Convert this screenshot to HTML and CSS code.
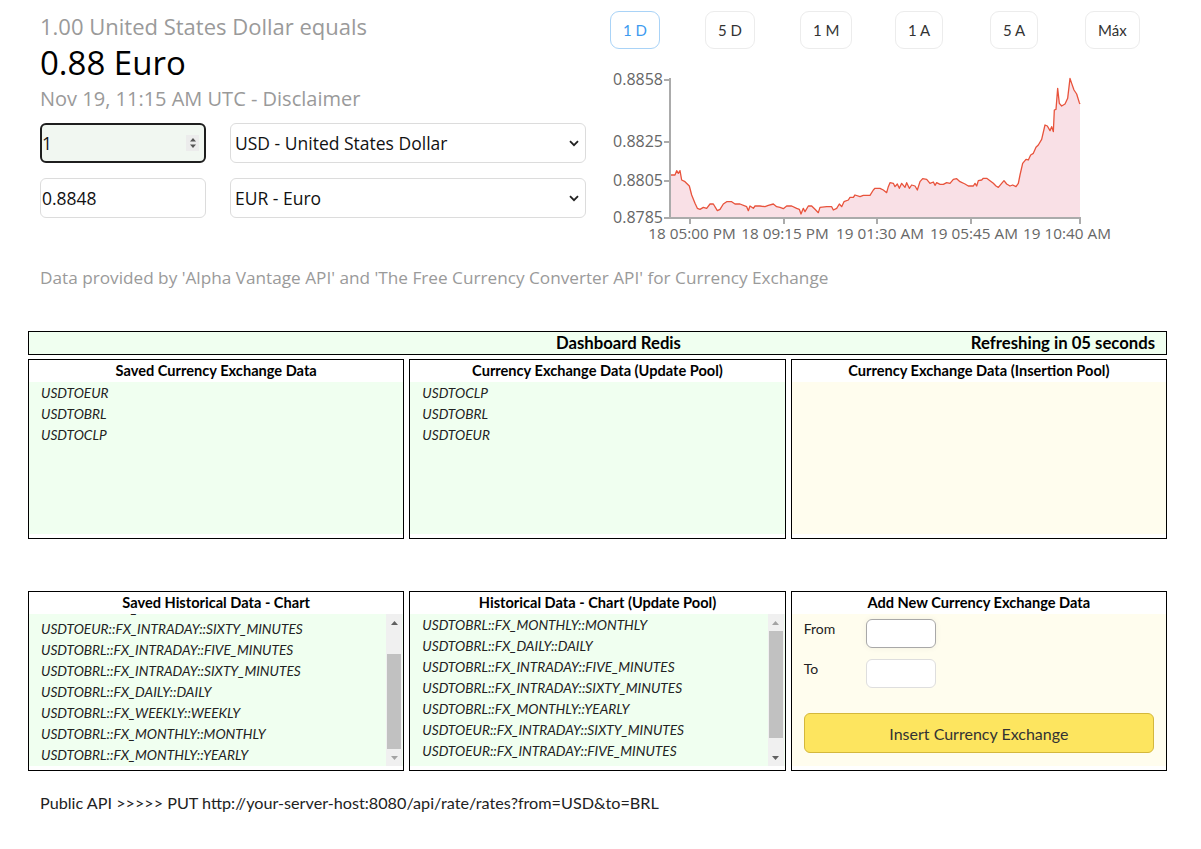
FILE: index.html
```html
<!DOCTYPE html>
<html lang="en">
<head>
<meta charset="utf-8">
<title>Currency Exchange - Dashboard Redis</title>
<link rel="stylesheet" href="styles.css">
</head>
<body>
<div class="page">
  <section class="top">
    <div class="converter">
      <div class="equals">1.00 United States Dollar equals</div>
      <div class="result">0.88 Euro</div>
      <div class="stamp">Nov 19, 11:15 AM UTC - Disclaimer</div>
      <div class="conv-row">
        <div class="num-box focused">
          <input class="num" type="text" value="1">
          <span class="spin"><svg width="8" height="14" viewBox="0 0 8 14"><path d="M1 5.5 L4 2 L7 5.5 Z M1 8.5 L4 12 L7 8.5 Z" fill="#555"/></svg></span>
        </div>
        <div class="sel-box">
          <select class="sel"><option>USD - United States Dollar</option></select>
          <svg class="chev" width="10" height="7" viewBox="0 0 10 7"><path d="M1 1.2 L5 5.2 L9 1.2" fill="none" stroke="#222" stroke-width="1.8"/></svg>
        </div>
      </div>
      <div class="conv-row">
        <div class="num-box">
          <input class="num" type="text" value="0.8848">
        </div>
        <div class="sel-box">
          <select class="sel"><option>EUR - Euro</option></select>
          <svg class="chev" width="10" height="7" viewBox="0 0 10 7"><path d="M1 1.2 L5 5.2 L9 1.2" fill="none" stroke="#222" stroke-width="1.8"/></svg>
        </div>
      </div>
    </div>
    <div class="chart-col">
      <div class="ranges">
        <button class="range active">1 D</button>
        <button class="range">5 D</button>
        <button class="range">1 M</button>
        <button class="range">1 A</button>
        <button class="range">5 A</button>
        <button class="range">Máx</button>
      </div>
      <svg class="chart" width="530" height="185" viewBox="0 0 530 185">
        <g transform="translate(30,0) scale(0.333333)">
          <path class="area" d="M90,475 L90,345 105,345 110,332 115,340 120,332 125,360 135,365 148,378 155,405 165,430 172,445 180,448 190,442 200,445 210,432 220,432 232,452 240,448 250,432 260,425 275,425 285,432 300,432 320,440 325,452 330,438 340,445 345,438 360,438 375,440 385,436 400,432 410,440 420,442 430,446 440,438 455,438 470,445 478,448 483,462 490,445 495,455 505,438 515,438 525,448 535,458 540,442 560,440 575,440 580,450 590,445 598,432 605,440 612,425 625,420 630,412 640,412 645,405 660,410 670,406 690,406 700,390 705,385 720,385 730,390 740,398 745,380 750,368 760,370 765,380 772,372 778,385 785,370 795,382 800,368 808,385 815,375 825,378 832,390 840,365 848,356 860,358 870,370 880,366 885,376 890,368 900,373 910,373 920,368 930,370 940,358 950,356 960,365 975,372 985,378 1000,378 1005,370 1010,378 1015,362 1025,360 1030,355 1040,355 1050,362 1060,370 1068,378 1075,382 1085,370 1092,362 1100,372 1110,378 1118,375 1128,380 1135,370 1140,345 1148,310 1158,298 1165,300 1172,285 1180,280 1188,262 1195,255 1205,238 1215,195 1222,198 1230,212 1235,200 1240,215 1243,150 1248,148 1253,85 1258,130 1265,138 1275,132 1283,115 1290,55 1295,70 1302,90 1310,102 1318,128 1320,132 L1320,475 Z"/>
          <polyline class="line" vector-effect="non-scaling-stroke" points="90,345 105,345 110,332 115,340 120,332 125,360 135,365 148,378 155,405 165,430 172,445 180,448 190,442 200,445 210,432 220,432 232,452 240,448 250,432 260,425 275,425 285,432 300,432 320,440 325,452 330,438 340,445 345,438 360,438 375,440 385,436 400,432 410,440 420,442 430,446 440,438 455,438 470,445 478,448 483,462 490,445 495,455 505,438 515,438 525,448 535,458 540,442 560,440 575,440 580,450 590,445 598,432 605,440 612,425 625,420 630,412 640,412 645,405 660,410 670,406 690,406 700,390 705,385 720,385 730,390 740,398 745,380 750,368 760,370 765,380 772,372 778,385 785,370 795,382 800,368 808,385 815,375 825,378 832,390 840,365 848,356 860,358 870,370 880,366 885,376 890,368 900,373 910,373 920,368 930,370 940,358 950,356 960,365 975,372 985,378 1000,378 1005,370 1010,378 1015,362 1025,360 1030,355 1040,355 1050,362 1060,370 1068,378 1075,382 1085,370 1092,362 1100,372 1110,378 1118,375 1128,380 1135,370 1140,345 1148,310 1158,298 1165,300 1172,285 1180,280 1188,262 1195,255 1205,238 1215,195 1222,198 1230,212 1235,200 1240,215 1243,150 1248,148 1253,85 1258,130 1265,138 1275,132 1283,115 1290,55 1295,70 1302,90 1310,102 1318,128 1320,132"/>
        </g>
        <g class="axis">
          <line x1="60" y1="18" x2="60" y2="159"/>
          <line x1="59" y1="158" x2="471" y2="158"/>
          <line x1="54" y1="20" x2="60" y2="20"/>
          <line x1="54" y1="82" x2="60" y2="82"/>
          <line x1="54" y1="121" x2="60" y2="121"/>
          <line x1="54" y1="158" x2="60" y2="158"/>
          <line x1="80" y1="158" x2="80" y2="164"/>
          <line x1="174" y1="158" x2="174" y2="164"/>
          <line x1="267" y1="158" x2="267" y2="164"/>
          <line x1="361" y1="158" x2="361" y2="164"/>
          <line x1="470" y1="158" x2="470" y2="164"/>
        </g>
        <g class="ylabels">
          <text x="53" y="25">0.8858</text>
          <text x="53" y="87">0.8825</text>
          <text x="53" y="126">0.8805</text>
          <text x="53" y="163">0.8785</text>
        </g>
        <g class="xlabels">
          <text x="82" y="179">18 05:00 PM</text>
          <text x="175" y="179">18 09:15 PM</text>
          <text x="270" y="179">19 01:30 AM</text>
          <text x="364" y="179">19 05:45 AM</text>
          <text x="457" y="179">19 10:40 AM</text>
        </g>
      </svg>
    </div>
  </section>

  <p class="credits">Data provided by 'Alpha Vantage API' and 'The Free Currency Converter API' for Currency Exchange</p>

  <section class="dashboard">
    <div class="dash-head">
      <span></span>
      <span class="dash-title">Dashboard Redis</span>
      <span class="dash-refresh">Refreshing in 05 seconds</span>
    </div>

    <div class="panels">
      <div class="panel">
        <div class="panel-title">Saved Currency Exchange Data</div>
        <div class="panel-body green">
          <ul class="items">
            <li>USDTOEUR</li>
            <li>USDTOBRL</li>
            <li>USDTOCLP</li>
          </ul>
        </div>
      </div>
      <div class="panel">
        <div class="panel-title">Currency Exchange Data (Update Pool)</div>
        <div class="panel-body green">
          <ul class="items">
            <li>USDTOCLP</li>
            <li>USDTOBRL</li>
            <li>USDTOEUR</li>
          </ul>
        </div>
      </div>
      <div class="panel">
        <div class="panel-title">Currency Exchange Data (Insertion Pool)</div>
        <div class="panel-body ivory"></div>
      </div>
    </div>

    <div class="panels second">
      <div class="panel">
        <div class="panel-title">Saved Historical Data - Chart</div>
        <div class="panel-body green scroller">
          <div class="viewport">
            <ul class="items scrolled">
              <li>USDTOEUR::FX_DAILY::DAILY</li>
              <li>USDTOEUR::FX_INTRADAY::SIXTY_MINUTES</li>
              <li>USDTOBRL::FX_INTRADAY::FIVE_MINUTES</li>
              <li>USDTOBRL::FX_INTRADAY::SIXTY_MINUTES</li>
              <li>USDTOBRL::FX_DAILY::DAILY</li>
              <li>USDTOBRL::FX_WEEKLY::WEEKLY</li>
              <li>USDTOBRL::FX_MONTHLY::MONTHLY</li>
              <li>USDTOBRL::FX_MONTHLY::YEARLY</li>
            </ul>
          </div>
          <div class="sbar">
            <span class="sbtn"><svg width="7" height="4" viewBox="0 0 7 4"><path d="M0 4 L3.5 0 L7 4 Z" fill="#606060"/></svg></span>
            <span class="strack"><span class="sthumb thumb-end"></span></span>
            <span class="sbtn"><svg width="7" height="4" viewBox="0 0 7 4"><path d="M0 0 L3.5 4 L7 0 Z" fill="#a3a3a3"/></svg></span>
          </div>
        </div>
      </div>
      <div class="panel">
        <div class="panel-title">Historical Data - Chart (Update Pool)</div>
        <div class="panel-body green scroller">
          <div class="viewport">
            <ul class="items">
              <li>USDTOBRL::FX_MONTHLY::MONTHLY</li>
              <li>USDTOBRL::FX_DAILY::DAILY</li>
              <li>USDTOBRL::FX_INTRADAY::FIVE_MINUTES</li>
              <li>USDTOBRL::FX_INTRADAY::SIXTY_MINUTES</li>
              <li>USDTOBRL::FX_MONTHLY::YEARLY</li>
              <li>USDTOEUR::FX_INTRADAY::SIXTY_MINUTES</li>
              <li>USDTOEUR::FX_INTRADAY::FIVE_MINUTES</li>
              <li>USDTOEUR::FX_DAILY::DAILY</li>
            </ul>
          </div>
          <div class="sbar">
            <span class="sbtn"><svg width="7" height="4" viewBox="0 0 7 4"><path d="M0 4 L3.5 0 L7 4 Z" fill="#a3a3a3"/></svg></span>
            <span class="strack"><span class="sthumb thumb-start"></span></span>
            <span class="sbtn"><svg width="7" height="4" viewBox="0 0 7 4"><path d="M0 0 L3.5 4 L7 0 Z" fill="#606060"/></svg></span>
          </div>
        </div>
      </div>
      <div class="panel">
        <div class="panel-title">Add New Currency Exchange Data</div>
        <div class="panel-body ivory form">
          <div class="form-grid">
            <label class="flabel" for="from">From</label>
            <input id="from" class="finput active-input" type="text">
            <label class="flabel" for="to">To</label>
            <input id="to" class="finput" type="text">
          </div>
          <button class="insert">Insert Currency Exchange</button>
        </div>
      </div>
    </div>
  </section>

  <p class="api">Public API &gt;&gt;&gt;&gt;&gt; PUT http://your-server-host:8080/api/rate/rates?from=USD&amp;to=BRL</p>
</div>
</body>
</html>
```

FILE: styles.css
```css
* { box-sizing: border-box; }

html, body {
  margin: 0;
  padding: 0;
  background: #fff;
}

body {
  font-family: Lato, "Noto Sans", sans-serif;
  color: #111;
}

.page {
  width: 1201px;
}

/* ---------- top section ---------- */
.top {
  display: flex;
  align-items: flex-start;
  gap: 24px;
  padding-left: 40px;
  font-family: "Open Sans", "Noto Sans", sans-serif;
}

.converter {
  width: 546px;
  padding-top: 13px;
}

.equals {
  font-size: 22px;
  line-height: 26px;
  color: #9a9a9a;
}

.result {
  margin-top: 4px;
  font-size: 33px;
  line-height: 40px;
  color: #000;
}

.stamp {
  margin-top: 4px;
  font-size: 20px;
  line-height: 24px;
  color: #9a9a9a;
}

.conv-row {
  display: flex;
  gap: 24px;
  margin-top: 12px;
}

.conv-row + .conv-row {
  margin-top: 15px;
}

.num-box {
  width: 166px;
  height: 40px;
  border: 1px solid #dcdcdc;
  border-radius: 6px;
  background: #fff;
  display: flex;
  align-items: center;
  padding: 0 5px 0 1px;
}

.num-box.focused {
  border: 2px solid #1e1e1e;
  background: #f1f7f1;
  padding-left: 0;
}

.num {
  flex: 1;
  min-width: 0;
  border: 0;
  outline: 0;
  background: transparent;
  font-family: inherit;
  font-size: 17.5px;
  color: #111;
  padding: 0;
}

.spin {
  width: 13px;
  height: 16px;
  background: #ececec;
  display: flex;
  align-items: center;
  justify-content: center;
}

.sel-box {
  position: relative;
  width: 356px;
  height: 40px;
}

.sel {
  appearance: none;
  -webkit-appearance: none;
  width: 100%;
  height: 100%;
  border: 1px solid #dcdcdc;
  border-radius: 6px;
  background: #fff;
  font-family: inherit;
  font-size: 17.5px;
  color: #111;
  padding: 0 28px 0 4px;
}

.chev {
  position: absolute;
  right: 7px;
  top: 17px;
  pointer-events: none;
}

.chart-col {
  width: 540px;
  padding-top: 11px;
}

.ranges {
  display: grid;
  grid-template-columns: repeat(6, 95px);
  justify-items: start;
}

.range {
  height: 38px;
  padding: 0 12px;
  border: 1px solid #ececec;
  border-radius: 9px;
  background: #fff;
  font-family: Lato, "Noto Sans", sans-serif;
  font-size: 15px;
  color: #333;
}

.range.active {
  border-color: #a9d3f7;
  color: #3d9bef;
}

.chart {
  display: block;
  margin-top: 11px;
}

.chart .area {
  fill: #f9e0e6;
}

.chart .line {
  fill: none;
  stroke: #e8533c;
  stroke-width: 1.3;
  stroke-linejoin: round;
}

.chart .axis line {
  stroke: #ababab;
  stroke-width: 2;
}

.chart text {
  font-family: "Open Sans", "Noto Sans", sans-serif;
  font-size: 16px;
  fill: #666;
}

.chart .xlabels text {
  text-anchor: middle;
  font-size: 15.3px;
}

.chart .ylabels text {
  text-anchor: end;
}

/* ---------- credits ---------- */
.credits {
  margin: 22px 0 0 40px;
  font-family: "Open Sans", "Noto Sans", sans-serif;
  font-size: 17.2px;
  line-height: 22px;
  color: #9a9a9a;
}

/* ---------- dashboard ---------- */
.dashboard {
  margin: 42px 0 0 28px;
  width: 1139px;
}

.dash-head {
  display: grid;
  grid-template-columns: 1fr auto 1fr;
  height: 24px;
  border: 1px solid #000;
  background: #f0fff0;
  padding: 0 11px 0 53px;
  font-weight: 700;
  font-size: 16.7px;
  line-height: 22px;
  color: #000;
}

.dash-refresh {
  justify-self: end;
}

.panels {
  display: grid;
  grid-template-columns: repeat(3, 1fr);
  gap: 5px;
  margin-top: 4px;
}

.panels.second {
  margin-top: 52px;
}

.panel {
  height: 180px;
  border: 1px solid #000;
  display: flex;
  flex-direction: column;
  padding-bottom: 4px;
}

.panel-title {
  height: 22px;
  line-height: 22px;
  text-align: center;
  font-weight: 700;
  font-size: 14.6px;
  color: #000;
}

.panel-body {
  flex: 1;
  min-height: 0;
}

.green { background: #f0fff0; }
.ivory { background: #fffdee; }

.items {
  list-style: none;
  margin: 0;
  padding: 0 0 0 12px;
}

.items li {
  font-style: italic;
  font-size: 13.7px;
  line-height: 21px;
  color: #222;
  white-space: nowrap;
}

.scroller {
  display: flex;
}

.viewport {
  flex: 1;
  overflow: hidden;
}

.items.scrolled {
  margin-top: -17px;
}

.sbar {
  width: 16px;
  margin-right: 1px;
  display: flex;
  flex-direction: column;
  background: #f0f0f0;
}

.sbtn {
  height: 17px;
  display: flex;
  align-items: center;
  justify-content: center;
}

.strack {
  flex: 1;
  display: flex;
  flex-direction: column;
  padding: 0 1px;
}

.sthumb {
  height: 95px;
  background: #c1c1c1;
}

.thumb-end { margin-top: auto; }
.thumb-start { margin-bottom: auto; height: 107px; }

/* ---------- add form ---------- */
.form {
  padding: 5px 12px 0 12px;
}

.form-grid {
  display: grid;
  grid-template-columns: 62px 70px;
  grid-auto-rows: 29px;
  row-gap: 11px;
  align-items: center;
}

.flabel {
  font-size: 14px;
  color: #222;
  align-self: start;
  line-height: 20px;
}

.finput {
  width: 70px;
  height: 29px;
  border: 1px solid #dedede;
  border-radius: 6px;
  background: #fff;
  outline: 0;
}

.finput.active-input {
  border-color: #a8a8a8;
  box-shadow: 0 0 6px rgba(0, 0, 0, 0.06);
}

.insert {
  display: block;
  width: 100%;
  height: 40px;
  margin-top: 25px;
  border: 1px solid #d4b83c;
  border-radius: 6px;
  background: #fde55f;
  font-family: inherit;
  font-size: 16px;
  color: #333;
}

/* ---------- footer ---------- */
.api {
  margin: 22px 0 0 40px;
  font-size: 16.2px;
  line-height: 20px;
  color: #222;
}
```
